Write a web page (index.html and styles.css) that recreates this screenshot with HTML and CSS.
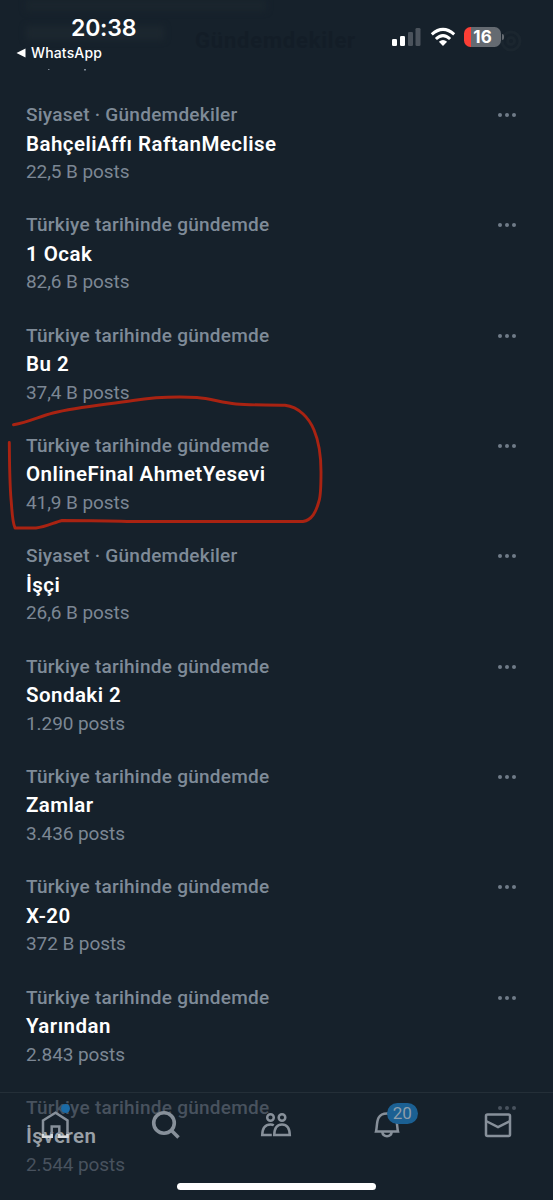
FILE: index.html
```html
<!DOCTYPE html>
<html lang="tr">
<head>
<meta charset="utf-8">
<title>Gündemdekiler</title>
<link rel="stylesheet" href="styles.css">
</head>
<body>
<main class="screen">
  <section class="trends">
    <article class="trend"><div><p class="meta">Siyaset · Gündemdekiler</p><h2 class="name">BahçeliAffı RaftanMeclise</h2><p class="count">22,5 B posts</p></div><span class="more"><i></i><i></i><i></i></span></article>
    <article class="trend"><div><p class="meta">Türkiye tarihinde gündemde</p><h2 class="name">1 Ocak</h2><p class="count">82,6 B posts</p></div><span class="more"><i></i><i></i><i></i></span></article>
    <article class="trend"><div><p class="meta">Türkiye tarihinde gündemde</p><h2 class="name">Bu 2</h2><p class="count">37,4 B posts</p></div><span class="more"><i></i><i></i><i></i></span></article>
    <article class="trend"><div><p class="meta">Türkiye tarihinde gündemde</p><h2 class="name">OnlineFinal AhmetYesevi</h2><p class="count">41,9 B posts</p></div><span class="more"><i></i><i></i><i></i></span></article>
    <article class="trend"><div><p class="meta">Siyaset · Gündemdekiler</p><h2 class="name">İşçi</h2><p class="count">26,6 B posts</p></div><span class="more"><i></i><i></i><i></i></span></article>
    <article class="trend"><div><p class="meta">Türkiye tarihinde gündemde</p><h2 class="name">Sondaki 2</h2><p class="count">1.290 posts</p></div><span class="more"><i></i><i></i><i></i></span></article>
    <article class="trend"><div><p class="meta">Türkiye tarihinde gündemde</p><h2 class="name">Zamlar</h2><p class="count">3.436 posts</p></div><span class="more"><i></i><i></i><i></i></span></article>
    <article class="trend"><div><p class="meta">Türkiye tarihinde gündemde</p><h2 class="name">X-20</h2><p class="count">372 B posts</p></div><span class="more"><i></i><i></i><i></i></span></article>
    <article class="trend"><div><p class="meta">Türkiye tarihinde gündemde</p><h2 class="name">Yarından</h2><p class="count">2.843 posts</p></div><span class="more"><i></i><i></i><i></i></span></article>
    <article class="trend under"><div><p class="meta">Türkiye tarihinde gündemde</p><h2 class="name">İşveren</h2><p class="count">2.544 posts</p></div><span class="more"><i></i><i></i><i></i></span></article>
  </section>

  <svg class="marker" viewBox="0 0 340 150" aria-hidden="true">
    <path d="M13.500 34.700C29 32 39 26.500 53 23C77 17 107 14.500 133 10.500C154 7.300 178 6.500 197 7.500C211 8.500 221 12.500 236 14C252 15.500 270 14.500 285 15.300C299 17 309 28 314 40C320 54 321 68 321 82C321 95 321 105 319 111C316 122 312 130 303 131.500L127 131.500C105 130.500 83 130.500 62 130.500C54 132.500 46 137 36 138L15 138C12 131 12 119 11 109C9.500 90 9.500 70 9.300 52.500"/>
  </svg>

  <header class="status">
    <div class="smudge"></div>
    <div class="ghost">Gündemdekiler</div>
    <svg class="ghost-gear" viewBox="0 0 24 24" aria-hidden="true"><circle cx="12" cy="12" r="3.500"/><circle cx="12" cy="12" r="9"/></svg>
    <svg class="tails" viewBox="0 0 60 2" aria-hidden="true"><path d="M12 0h1.500v1H12zM48 0h2v1.500h-2z"/></svg>
    <div class="clock-group">
      <time class="clock">20:38</time>
      <div class="back"><svg viewBox="0 0 10 10" aria-hidden="true"><path d="M.5 5 9.500.5v9z"/></svg><span>WhatsApp</span></div>
    </div>
    <div class="signals">
      <svg class="cell" viewBox="0 0 29 19" aria-hidden="true"><rect x="0" y="12" width="5" height="7" rx="1.300"/><rect x="8" y="9" width="5" height="10" rx="1.300"/><g class="dim"><rect x="16" y="5" width="5" height="14" rx="1.300"/><rect x="23.500" y="1" width="5" height="18" rx="1.300"/></g></svg>
      <svg class="wifi" viewBox="0 0 26 19" aria-hidden="true"><path class="arc" d="M1.800 7.400Q13-2.600 24.200 7.400M5.900 12Q13 5.300 20.100 12"/><path d="M8.900 14.800Q13 11 17.100 14.800L13 19z"/></svg>
      <div class="battery"><span>16</span></div>
    </div>
  </header>

  <nav class="tabs">
    <a class="tab"><svg viewBox="0 0 36 36" aria-hidden="true"><path d="M6 13.500 18.500 5.800l12 7.700v16.200h-8.200V19.500h-7.600v10.200H6z"/><path class="glow" d="M6 27v2.700h8.700V27M22.300 27v2.700h8.200V27"/></svg><b class="dot"></b></a>
    <a class="tab"><svg viewBox="0 0 36 36" aria-hidden="true"><g class="thick"><circle cx="16" cy="16" r="10.300"/><path d="m23.500 23.500 7 7"/></g></svg></a>
    <a class="tab"><svg viewBox="0 0 36 36" aria-hidden="true"><circle cx="12.500" cy="10.500" r="3.300"/><circle cx="24" cy="10.500" r="3.300"/><path d="M13.800 28H4.200Q4.500 17.500 12.500 17.500c1.300 0 2.500.3 3.300.8M16.200 28Q16.500 17.500 24 17.500T31.800 28z"/></svg></a>
    <a class="tab bell"><svg viewBox="0 0 36 36" aria-hidden="true"><path d="M6 24.500C7.800 18 5 6.500 17 6.500S26.200 18 28 24.500zM12.200 25c1 5.500 8.600 5.500 9.600 0"/></svg><b class="badge">20</b></a>
    <a class="tab"><svg viewBox="0 0 36 36" aria-hidden="true"><rect x="6" y="7.500" width="24" height="21.500" rx="1.500"/><path d="m6 14 12 6 12-6"/></svg></a>
    <span class="home-bar"></span>
  </nav>
</main>
</body>
</html>
```
FILE: styles.css
```css
* { box-sizing: border-box; }
body { margin: 0; background: #16212b; }
p, h2 { margin: 0; }
.screen {
  position: relative;
  width: 553px;
  height: 1200px;
  overflow: hidden;
  background: #16212b;
  color: #fff;
  font-family: Roboto, "Noto Sans", sans-serif;
}
.trends { padding: 101px 37px 0 26px; }
.trend {
  display: flex;
  justify-content: space-between;
  height: 110.330px;
  white-space: nowrap;
}
.meta, .name, .count { line-height: 28.500px; }
.meta { font-size: 19px; font-weight: 500; color: #7f8b98; letter-spacing: .25px; }
.name { font-size: 20.500px; font-weight: 600; letter-spacing: .45px; }
.count { font-size: 19px; font-weight: 400; color: #7c8794; letter-spacing: -.08px; }
.more { display: flex; gap: 2.800px; height: 28px; align-items: center; }
.more i { width: 4px; height: 4px; border-radius: 50%; background: #6f7b88; }
.under .meta, .under .count { color: #48525e; }
.under .name { color: #99a0a7; }
.under .more i { background: #48525e; }

/* Hand-drawn highlight over the list */
.marker { position: absolute; left: 0; top: 390px; width: 340px; height: 150px; }
.marker path { fill: none; stroke: #a92312; stroke-width: 2.900; stroke-linecap: round; stroke-linejoin: round; }

.status {
  position: absolute;
  inset: 0 0 auto 0;
  height: 69px;
  background: #16212b;
  display: flex;
  justify-content: space-between;
}
/* Content faintly visible through the translucent bar */
.ghost { position: absolute; left: 195px; top: 28px; font-size: 22px; line-height: 26px; font-weight: 700; letter-spacing: .8px; color: #131d27; }
.ghost-gear { position: absolute; left: 499px; top: 29px; width: 24px; height: 24px; fill: none; stroke: #1b262f; stroke-width: 3; }
.smudge { position: absolute; left: 26px; top: 26px; width: 138px; height: 14px; background: #1c272f; filter: blur(3px); }
.smudge::before { content: ""; position: absolute; left: 0; top: -26px; width: 240px; height: 11px; background: #1a252d; }
.tails { position: absolute; left: 36px; top: 69px; width: 60px; height: 2px; fill: #7c8794; }
.clock-group { position: relative; padding: 14px 0 0 16px; }
.clock { display: block; padding-left: 55px; font: 600 23px/28px Inter, sans-serif; letter-spacing: -.2px; }
.back { display: flex; align-items: center; gap: 5px; font: 500 14px/17px Inter, sans-serif; padding-top: 2px; letter-spacing: .15px; }
.back svg { width: 10px; height: 10px; fill: #fff; }
.signals { position: relative; display: flex; align-items: flex-start; padding: 27px 52px 0 0; }
.cell { width: 29px; height: 19px; margin-right: 9px; fill: #fff; }
.cell .dim { fill: #4b535c; }
.wifi { width: 26px; height: 19px; margin-right: 8px; fill: #fff; }
.wifi .arc { fill: none; stroke: #fff; stroke-width: 3; }
.battery {
  position: relative;
  width: 37px;
  height: 20px;
  border-radius: 6.500px;
  background: linear-gradient(90deg, #fb3e35 7px, #646a71 7px);
  font: 700 17px/20px Inter, sans-serif;
  text-align: center;
}
.battery::after { content: ""; position: absolute; left: 38px; top: 7px; width: 2px; height: 6px; border-radius: 0 3px 3px 0; background: #646a71; }

.tabs {
  position: absolute;
  inset: auto 0 0 0;
  height: 108px;
  border-top: 1px solid #242f38;
  display: grid;
  grid-template-columns: repeat(5, 1fr);
  align-items: start;
  padding-top: 14px;
}
.tab { position: relative; display: flex; justify-content: center; }
.tab svg { width: 36px; height: 36px; fill: none; stroke: #87909a; stroke-width: 2.500; }
.tab .thick { stroke-width: 3.600; }
.tab .glow { stroke: #d9dcde; }
.bell { padding-left: 2px; }
.dot { position: absolute; left: 61px; top: -3px; width: 9px; height: 9px; border-radius: 50%; background: #1b6ba6; }
.badge {
  position: absolute;
  left: 55px;
  top: -4px;
  width: 31px;
  height: 21px;
  border-radius: 11px;
  background: #1b6093;
  color: #8d9daa;
  font-weight: 400;
  font-size: 17px;
  line-height: 21px;
  text-align: center;
}
.home-bar { position: absolute; left: 177px; bottom: 10px; width: 199px; height: 7px; border-radius: 4px; background: #fff; }
```
